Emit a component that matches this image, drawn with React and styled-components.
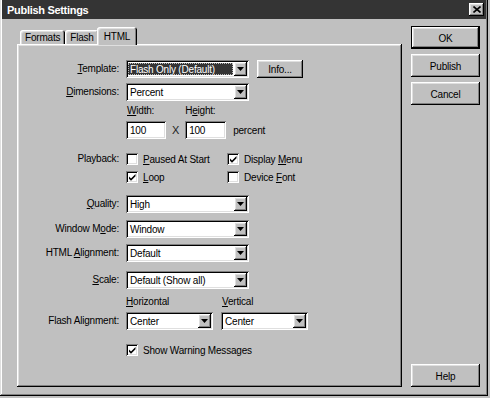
import React from "react";
import styled, { createGlobalStyle, css } from "styled-components";

const GlobalStyle = createGlobalStyle`
  html, body {
    margin: 0;
    padding: 0;
    background: #c0c0c0;
  }
  body {
    width: 490px;
    height: 398px;
    overflow: hidden;
    font-family: "Liberation Sans", Arial, sans-serif;
    font-size: 10px;
    letter-spacing: -0.2px;
    color: #000;
  }
`;

const raised = css`
  box-shadow: inset -1px -1px #000, inset 1px 1px #fff, inset -2px -2px #808080,
    inset 2px 2px #dfdfdf;
`;

const sunken = css`
  box-shadow: inset 1px 1px #808080, inset -1px -1px #fff, inset 2px 2px #000,
    inset -2px -2px #dfdfdf;
`;

const Window = styled.div`
  width: 488px;
  height: 396px;
  box-sizing: border-box;
  padding: 0 2px 2px 2px;
  background: #c0c0c0;
  box-shadow: inset -1px -1px #000, inset 1px 0 #dfdfdf, inset -2px -2px #808080,
    inset 2px 0 #fff;
  display: flex;
  flex-direction: column;
`;

const TitleBar = styled.div`
  height: 19px;
  flex: none;
  background: #343434;
  display: flex;
  align-items: center;
  justify-content: space-between;
  padding: 0 2px 0 5px;
`;

const Title = styled.span`
  color: #fff;
  font-weight: bold;
  font-size: 11px;
  letter-spacing: -0.3px;
`;

const CloseButton = styled.div`
  width: 15px;
  height: 13px;
  background: #c0c0c0;
  ${raised};
  display: flex;
  align-items: center;
  justify-content: center;
`;

const Body = styled.div`
  flex: 1;
  display: flex;
  gap: 9px;
  padding: 7px 0 7px 15px;
`;

const TabArea = styled.div`
  width: 385px;
  display: flex;
  flex-direction: column;
`;

const TabStrip = styled.div`
  height: 18px;
  display: flex;
  align-items: flex-end;
  padding-left: 3px;
`;

const Tab = styled.div`
  position: relative;
  box-sizing: border-box;
  height: ${(p) => (p.$active ? 18 : 14)}px;
  margin: ${(p) => (p.$active ? "0 -1px -1px -2px" : "0")};
  padding: ${(p) => (p.$active ? "1px 7px 0" : "1px 5px 0")};
  z-index: ${(p) => (p.$active ? 1 : 0)};
  display: flex;
  align-items: center;
  background: #c0c0c0;
  border-radius: 3px 3px 0 0;
  box-shadow: inset 1px 1px #fff, inset -1px 0 #000, inset -2px 0 #808080,
    inset 2px 2px #dfdfdf;
`;

const Panel = styled.div`
  flex: 1;
  ${raised};
  padding: 16px 0 0 2px;
  display: flex;
  flex-direction: column;
`;

const Row = styled.div`
  display: grid;
  grid-template-columns: 100px auto;
  column-gap: 7px;
  align-items: ${(p) => p.$align || "center"};
  margin-top: ${(p) => p.$mt || 0}px;
`;

const Label = styled.div`
  text-align: right;
  white-space: nowrap;
  line-height: ${(p) => p.$lh || 18}px;
`;

const Controls = styled.div`
  display: flex;
  align-items: ${(p) => p.$align || "center"};
  gap: ${(p) => p.$gap || 0}px;
`;

const U = styled.span`
  text-decoration: underline;
  text-underline-offset: 1px;
`;

const SelectBox = styled.div`
  width: ${(p) => p.$w}px;
  height: 18px;
  box-sizing: border-box;
  padding: 2px;
  background: #fff;
  ${sunken};
  display: flex;
`;

const SelectText = styled.div`
  flex: 1;
  display: flex;
  align-items: center;
  padding-left: 2px;
  white-space: nowrap;
  overflow: hidden;
  ${(p) =>
    p.$focused &&
    css`
      margin: 1px 1px 1px 0;
      padding-left: 2px;
      background: #343434;
      color: #fff;
      outline: 1px dotted #bbb;
      outline-offset: -1px;
    `}
`;

const DropButton = styled.div`
  width: 13px;
  background: #c0c0c0;
  ${raised};
  display: flex;
  align-items: center;
  justify-content: center;
`;

const TextField = styled.div`
  width: ${(p) => p.$w}px;
  height: 18px;
  box-sizing: border-box;
  padding: 0 4px;
  background: #fff;
  ${sunken};
  display: flex;
  align-items: center;
`;

const Field = styled.div`
  display: flex;
  flex-direction: column;
  gap: ${(p) => p.$gap || 4}px;
`;

const FieldLabel = styled.div`
  height: ${(p) => p.$h || 13}px;
  line-height: ${(p) => p.$h || 13}px;
  padding-left: ${(p) => p.$indent || 0}px;
`;

const Times = styled.span`
  margin: 0 6px 3px;
  font-size: 11px;
  color: #222;
`;

const Unit = styled.span`
  margin: 0 0 3px 7px;
`;

const CheckGrid = styled.div`
  display: grid;
  grid-template-columns: 101px auto;
  row-gap: 4px;
`;

const Check = styled.div`
  height: 14px;
  display: flex;
  align-items: center;
  gap: 5px;
  white-space: nowrap;
`;

const CheckBox = styled.div`
  width: 12px;
  height: 12px;
  box-sizing: border-box;
  background: #fff;
  ${sunken};
  display: flex;
  align-items: center;
  justify-content: center;
`;

const Button = styled.div`
  box-sizing: border-box;
  width: ${(p) => p.$w || 69}px;
  height: ${(p) => p.$h || 23}px;
  margin-left: ${(p) => p.$ml || 0}px;
  background: #c0c0c0;
  ${raised};
  ${(p) =>
    p.$default &&
    css`
      border: 1px solid #000;
    `}
  display: flex;
  align-items: center;
  justify-content: center;
  padding-top: 1px;
`;

const ButtonColumn = styled.div`
  display: flex;
  flex-direction: column;
  gap: 5px;
`;

const Spacer = styled.div`
  flex: 1;
`;

const Arrow = () => (
  <svg width="7" height="4" viewBox="0 0 7 4">
    <polygon points="0,0 7,0 3.5,4" fill="#000" />
  </svg>
);

const CheckMark = () => (
  <svg width="7" height="7" viewBox="0 0 7 7">
    <polygon points="0,2.5 2,4.5 6.5,0 6.5,2.2 2,6.7 0,4.7" fill="#000" />
  </svg>
);

const Select = ({ w = 123, value, focused }) => (
  <SelectBox $w={w}>
    <SelectText $focused={focused}>{value}</SelectText>
    <DropButton>
      <Arrow />
    </DropButton>
  </SelectBox>
);

const Checkbox = ({ checked, children }) => (
  <Check>
    <CheckBox>{checked && <CheckMark />}</CheckBox>
    <span>{children}</span>
  </Check>
);

export default function App() {
  return (
    <>
      <GlobalStyle />
      <Window>
        <TitleBar>
          <Title>Publish Settings</Title>
          <CloseButton>
            <svg width="8" height="7" viewBox="0 0 8 7">
              <path d="M0.5 0.5 L7.5 6.5 M7.5 0.5 L0.5 6.5" stroke="#000" strokeWidth="1.6" />
            </svg>
          </CloseButton>
        </TitleBar>
        <Body>
          <TabArea>
            <TabStrip>
              <Tab>Formats</Tab>
              <Tab>Flash</Tab>
              <Tab $active>HTML</Tab>
            </TabStrip>
            <Panel>
              <Row>
                <Label>
                  <U>T</U>emplate:
                </Label>
                <Controls>
                  <Select value="Flash Only (Default)" focused />
                  <Button $w={46} $h={18} $ml={8}>
                    Info...
                  </Button>
                </Controls>
              </Row>
              <Row $mt={5}>
                <Label>
                  <U>D</U>imensions:
                </Label>
                <Controls>
                  <Select value="Percent" />
                </Controls>
              </Row>
              <Row $mt={3}>
                <div />
                <Controls $align="flex-end">
                  <Field>
                    <FieldLabel $indent={1}>
                      <U>W</U>idth:
                    </FieldLabel>
                    <TextField $w={40}>100</TextField>
                  </Field>
                  <Times>X</Times>
                  <Field>
                    <FieldLabel>
                      H<U>e</U>ight:
                    </FieldLabel>
                    <TextField $w={41}>100</TextField>
                  </Field>
                  <Unit>percent</Unit>
                </Controls>
              </Row>
              <Row $mt={13} $align="start">
                <Label $lh={14}>Playback:</Label>
                <CheckGrid>
                  <Checkbox>
                    <U>P</U>aused At Start
                  </Checkbox>
                  <Checkbox checked>
                    Display <U>M</U>enu
                  </Checkbox>
                  <Checkbox checked>
                    <U>L</U>oop
                  </Checkbox>
                  <Checkbox>
                    Device <U>F</U>ont
                  </Checkbox>
                </CheckGrid>
              </Row>
              <Row $mt={11}>
                <Label>
                  <U>Q</U>uality:
                </Label>
                <Controls>
                  <Select value="High" />
                </Controls>
              </Row>
              <Row $mt={7}>
                <Label>
                  Window M<U>o</U>de:
                </Label>
                <Controls>
                  <Select value="Window" />
                </Controls>
              </Row>
              <Row $mt={6}>
                <Label>
                  HTML <U>A</U>lignment:
                </Label>
                <Controls>
                  <Select value="Default" />
                </Controls>
              </Row>
              <Row $mt={9}>
                <Label>
                  <U>S</U>cale:
                </Label>
                <Controls>
                  <Select value="Default (Show all)" />
                </Controls>
              </Row>
              <Row $mt={7} $align="end">
                <Label>Flash Alignment:</Label>
                <Controls $gap={8}>
                  <Field>
                    <FieldLabel $h={12}>
                      <U>H</U>orizontal
                    </FieldLabel>
                    <Select w={87} value="Center" />
                  </Field>
                  <Field>
                    <FieldLabel $h={12} $indent={1}>
                      <U>V</U>ertical
                    </FieldLabel>
                    <Select w={87} value="Center" />
                  </Field>
                </Controls>
              </Row>
              <Row $mt={13}>
                <div />
                <Checkbox checked>Show Warning Messages</Checkbox>
              </Row>
            </Panel>
          </TabArea>
          <ButtonColumn>
            <Button $default>OK</Button>
            <Button>Publish</Button>
            <Button>Cancel</Button>
            <Spacer />
            <Button>Help</Button>
          </ButtonColumn>
        </Body>
      </Window>
    </>
  );
}
